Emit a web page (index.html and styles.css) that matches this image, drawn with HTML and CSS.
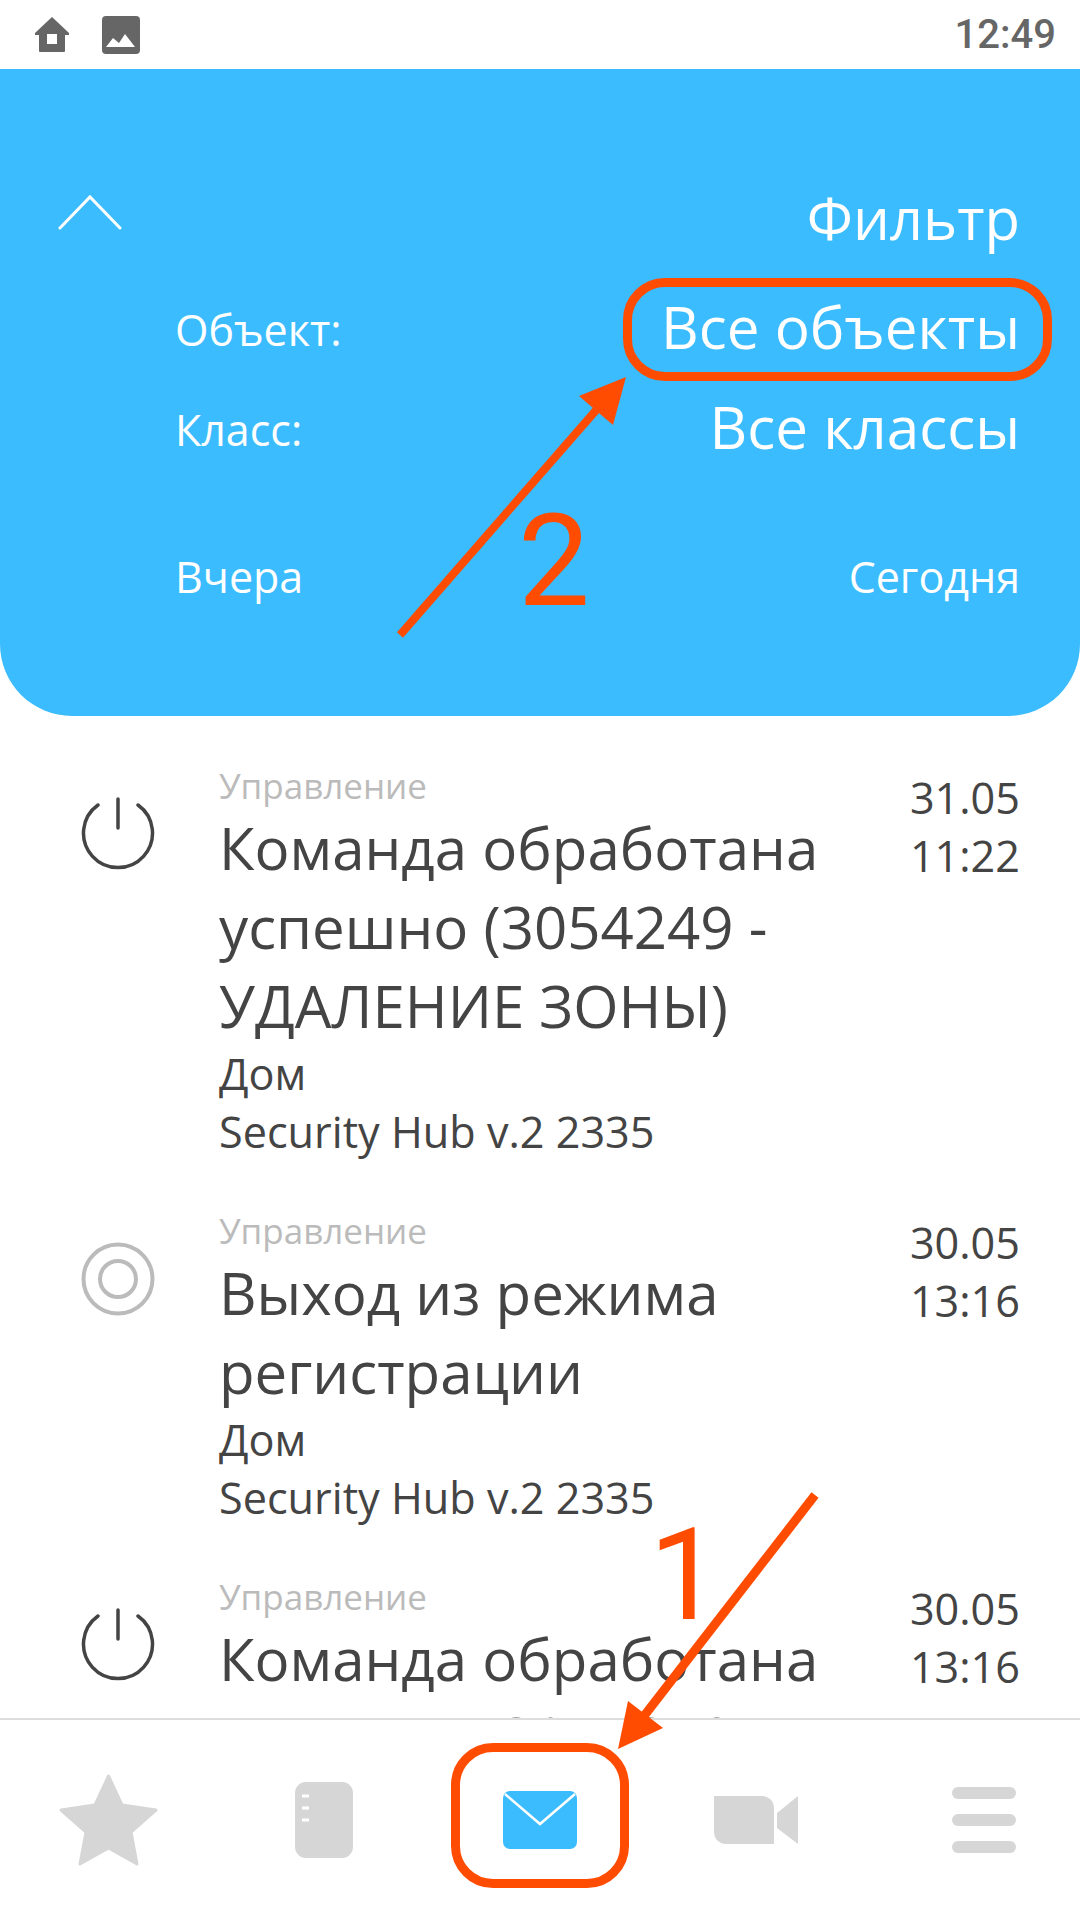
FILE: index.html
```html
<!DOCTYPE html>
<html lang="ru">
<head>
    <meta charset="UTF-8">
    <title>События</title>
    <link rel="stylesheet" href="styles.css">
</head>
<body>
    <div class="screen">
        <div class="status-bar">
            <div class="status-icons">
                <svg class="status-home" width="34" height="36" viewBox="0 0 34 36">
                    <path fill-rule="evenodd" d="M17 0 34 16 v2 h-4 v16 a1 1 0 0 1 -1 1 H5 a1 1 0 0 1 -1 -1 V18 H0 v-2 Z M12 17 v10 h10 v-10 Z"/>
                </svg>
                <svg class="status-image" width="38" height="38" viewBox="0 0 38 38">
                    <path fill-rule="evenodd" d="M4 0 H34 a4 4 0 0 1 4 4 V34 a4 4 0 0 1 -4 4 H4 a4 4 0 0 1 -4 -4 V4 a4 4 0 0 1 4 -4 Z M4 31 H33 L23 18 17 27 11 22 Z"/>
                </svg>
            </div>
            <span class="status-time">12:49</span>
        </div>

        <div class="filter-panel">
            <div class="filter-head">
                <svg class="chevron" width="64" height="36" viewBox="0 0 64 36" fill="none" stroke="#fff" stroke-width="3" stroke-linecap="round">
                    <path d="M2 34 32 3 62 34"/>
                </svg>
                <span class="filter-title">Фильтр</span>
            </div>
            <div class="filter-row">
                <span class="filter-label">Объект:</span>
                <span class="filter-value">Все объекты</span>
            </div>
            <div class="filter-row">
                <span class="filter-label">Класс:</span>
                <span class="filter-value">Все классы</span>
            </div>
            <div class="filter-dates">
                <span>Вчера</span>
                <span>Сегодня</span>
            </div>
        </div>

        <div class="event-list">
            <div class="event">
                <div class="event-icon">
                    <svg width="74" height="74" viewBox="0 0 74 74" fill="none" stroke="#444" stroke-width="3.5" stroke-linecap="round">
                        <path d="M17 8 A34.500 34.500 0 1 0 57 8"/>
                        <path d="M37 2 V31"/>
                    </svg>
                </div>
                <div class="event-body">
                    <div class="event-class">Управление</div>
                    <div class="event-title">Команда обработана успешно (3054249 - УДАЛЕНИЕ ЗОНЫ)</div>
                    <div class="event-meta">Дом</div>
                    <div class="event-meta">Security Hub v.2 2335</div>
                </div>
                <div class="event-time">31.05<br>11:22</div>
            </div>
            <div class="event">
                <div class="event-icon">
                    <svg width="74" height="74" viewBox="0 0 74 74" fill="none" stroke="#bbb" stroke-width="4">
                        <circle cx="37" cy="37" r="34.500"/>
                        <circle cx="37" cy="37" r="18"/>
                    </svg>
                </div>
                <div class="event-body">
                    <div class="event-class">Управление</div>
                    <div class="event-title">Выход из режима регистрации</div>
                    <div class="event-meta">Дом</div>
                    <div class="event-meta">Security Hub v.2 2335</div>
                </div>
                <div class="event-time">30.05<br>13:16</div>
            </div>
            <div class="event">
                <div class="event-icon">
                    <svg width="74" height="74" viewBox="0 0 74 74" fill="none" stroke="#444" stroke-width="3.5" stroke-linecap="round">
                        <path d="M17 8 A34.500 34.500 0 1 0 57 8"/>
                        <path d="M37 2 V31"/>
                    </svg>
                </div>
                <div class="event-body">
                    <div class="event-class">Управление</div>
                    <div class="event-title">Команда обработана успешно (3054249 - УДАЛЕНИЕ ЗОНЫ)</div>
                </div>
                <div class="event-time">30.05<br>13:16</div>
            </div>
        </div>

        <div class="tab-bar">
            <div class="tab">
                <svg width="99" height="92" viewBox="0 0 99 92" fill="#d6d6d6" stroke="#d6d6d6" stroke-width="3" stroke-linejoin="round">
                    <path d="M49.500 2 63 31 97 36 72 58 78 90 49.500 74 21 90 27 58 2 36 36 31 Z"/>
                </svg>
            </div>
            <div class="tab">
                <svg width="58" height="76" viewBox="0 0 58 76">
                    <rect width="58" height="76" rx="11" fill="#d6d6d6"/>
                    <path d="M7 14 h7 M7 26 h7 M7 38 h7" stroke="#fff" stroke-width="3"/>
                </svg>
            </div>
            <div class="tab">
                <svg width="74" height="58" viewBox="0 0 74 58">
                    <rect width="74" height="58" rx="7" fill="#3bbcff"/>
                    <path d="M2 3 37 33 72 3" fill="none" stroke="#fff" stroke-width="2.500"/>
                </svg>
            </div>
            <div class="tab">
                <svg width="84" height="48" viewBox="0 0 84 48" fill="#d6d6d6">
                    <path d="M0 0 H48 A12 12 0 0 1 60 12 V48 H12 A12 12 0 0 1 0 36 Z"/>
                    <path d="M63 17 84 0 V48 L63 32 Z"/>
                </svg>
            </div>
            <div class="tab tab-menu">
                <div class="menu-bar"></div>
                <div class="menu-bar"></div>
                <div class="menu-bar"></div>
            </div>
        </div>

        <!-- annotations on top of the screenshot -->
        <svg class="arrows" width="1080" height="1920" viewBox="0 0 1080 1920" fill="#ff4c00" stroke="none">
            <path d="M400 635 598 408" stroke="#ff4c00" stroke-width="8" fill="none"/>
            <path d="M626 377 579 396 613 425 Z"/>
            <path d="M815 1495 644 1716" stroke="#ff4c00" stroke-width="9" fill="none"/>
            <path d="M618 1749 628 1701 663 1728 Z"/>
        </svg>
        <div class="mark mark-filter"></div>
        <div class="mark mark-tab"></div>
        <span class="step step-two">2</span>
        <span class="step step-one">1</span>
    </div>
</body>
</html>
```

FILE: styles.css
```css
:root {
    --blue: #3bbcff;
    --orange: #ff4c00;
    --text: #444;
    --text-light: #bbb;
    --tab-gray: #d6d6d6;
}

* {
    box-sizing: border-box;
    margin: 0;
    padding: 0;
}

body {
    background: #fff;
    color: var(--text);
    font-family: "Open Sans", sans-serif;
}

svg {
    display: block;
}

.screen {
    position: relative;
    width: 1080px;
    height: 1920px;
    display: flex;
    flex-direction: column;
    overflow: hidden;
}

.status-bar {
    flex: 0 0 69px;
    display: flex;
    align-items: center;
    justify-content: space-between;
    padding: 0 24px 0 35px;
}

.status-icons {
    display: flex;
    align-items: center;
    gap: 33px;
    fill: #666;
}

.status-time {
    font-family: Roboto, sans-serif;
    font-size: 40px;
    font-weight: 500;
    color: #666;
}

.filter-panel {
    flex: 0 0 647px;
    background: var(--blue);
    border-radius: 0 0 72px 72px;
    color: #fff;
    padding: 113px 60px 0 58px;
}

.filter-head {
    display: flex;
    align-items: flex-start;
    justify-content: space-between;
    height: 97px;
}

.chevron {
    margin-top: 12px;
}

.filter-title {
    font-size: 58px;
    line-height: 72px;
}

.filter-row {
    display: flex;
    align-items: center;
    justify-content: space-between;
    height: 100px;
    padding-left: 117px;
}

.filter-label {
    font-size: 43px;
    padding-top: 1px;
}

.filter-value {
    font-size: 58.400px;
    padding-bottom: 5px;
}

.filter-dates {
    display: flex;
    justify-content: space-between;
    padding-left: 117px;
    margin-top: 68px;
    font-size: 43px;
}

.event-list {
    flex: 1;
    min-height: 0;
    overflow: hidden;
    padding-top: 48px;
}

.event {
    display: flex;
    padding: 0 60px 48px 81px;
}

.event-icon {
    flex: 0 0 138px;
    padding-top: 33px;
}

.event-body {
    flex: 1;
}

.event-class {
    font-size: 35px;
    line-height: 44px;
    color: var(--text-light);
}

.event-title {
    font-size: 58.200px;
    line-height: 79px;
}

.event-meta {
    font-size: 43.200px;
    line-height: 58px;
}

.event-time {
    flex: 0 0 120px;
    padding-top: 5px;
    font-size: 43.200px;
    line-height: 58px;
    text-align: right;
}

.tab-bar {
    position: relative;
    flex: 0 0 202px;
    display: grid;
    grid-template-columns: repeat(5, 1fr);
    background: #fff;
    border-top: 2px solid #ddd;
}

.tab {
    display: flex;
    flex-direction: column;
    align-items: center;
    justify-content: center;
}

.tab-menu {
    gap: 15px;
    padding-left: 24px;
}

.menu-bar {
    width: 64px;
    height: 12px;
    border-radius: 6px;
    background: var(--tab-gray);
}

.arrows {
    position: absolute;
    top: 0;
    left: 0;
}

.mark {
    position: absolute;
    border: 9px solid var(--orange);
    border-radius: 42px;
}

.mark-filter {
    left: 623px;
    top: 278px;
    width: 429px;
    height: 103px;
}

.mark-tab {
    left: 451px;
    top: 1743px;
    width: 178px;
    height: 145px;
}

.step {
    position: absolute;
    font-family: Roboto, sans-serif;
    font-size: 128px;
    line-height: 1;
    color: var(--orange);
}

.step-two {
    left: 518px;
    top: 497px;
}

.step-one {
    left: 649px;
    top: 1511px;
}
```
